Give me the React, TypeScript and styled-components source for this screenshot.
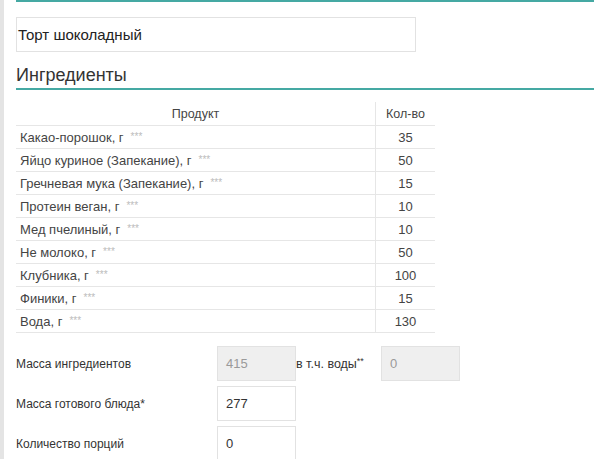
import styled, { createGlobalStyle } from "styled-components";

const GlobalStyle = createGlobalStyle`
  html, body {
    margin: 0;
    padding: 0;
    background: #ffffff;
  }
  body {
    font-family: "Liberation Sans", Arial, sans-serif;
    color: #333;
  }
`;

const Page = styled.div`
  min-height: 459px;
  border-left: 4px solid #e4e4e4;
  box-sizing: border-box;
  padding-left: 12px;
  overflow: hidden;
`;

const TopRule = styled.div`
  height: 2px;
  background: #45a9a3;
`;

const NameBox = styled.div`
  margin-top: 15px;
  width: 400px;
  height: 35px;
  box-sizing: border-box;
  border: 1px solid #e2e2e2;
  padding-left: 1px;
  display: flex;
  align-items: center;
  font-size: 15px;
  color: #222;
`;

const Heading = styled.h2`
  margin: 12px 0 0;
  font-size: 18px;
  font-weight: normal;
  color: #333;
  line-height: 22px;
  padding-bottom: 2px;
  border-bottom: 2px solid #45a9a3;
`;

const Table = styled.table`
  margin-top: 12px;
  width: 419px;
  border-collapse: collapse;
  font-size: 13px;
  color: #444;
`;

const HeadCell = styled.th<{ $qty?: boolean }>`
  height: 23px;
  padding: 0;
  font-weight: normal;
  font-size: 12.5px;
  text-align: center;
  width: ${(p) => (p.$qty ? "59px" : "auto")};
  border-left: ${(p) => (p.$qty ? "1px solid #e6e6e6" : "none")};
  border-bottom: 1px solid #e6e6e6;
`;

const Cell = styled.td<{ $qty?: boolean }>`
  height: 22px;
  padding: 0 0 0 ${(p) => (p.$qty ? "0" : "4px")};
  text-align: ${(p) => (p.$qty ? "center" : "left")};
  border-left: ${(p) => (p.$qty ? "1px solid #e6e6e6" : "none")};
  border-bottom: 1px solid #e6e6e6;
  white-space: nowrap;
`;

const Stars = styled.span`
  margin-left: 7px;
  font-size: 10px;
  color: #bcbcbc;
  vertical-align: 2px;
`;

const Form = styled.div`
  margin-top: 13px;
  display: flex;
  flex-direction: column;
  gap: 5px;
`;

const FormRow = styled.div`
  display: flex;
  align-items: center;
  height: 35px;
`;

const Label = styled.div`
  width: 201px;
  font-size: 12px;
  color: #333;
`;

const SubLabel = styled.div`
  width: 85px;
  font-size: 12.5px;
  color: #333;
  sup {
    font-size: 9px;
    vertical-align: 4px;
  }
`;

const Field = styled.div<{ $disabled?: boolean }>`
  width: 79px;
  height: 35px;
  box-sizing: border-box;
  border: 1px solid #e2e2e2;
  background: ${(p) => (p.$disabled ? "#efefef" : "#ffffff")};
  color: ${(p) => (p.$disabled ? "#9a9a9a" : "#333")};
  font-size: 13px;
  padding: 0 8px;
  display: flex;
  align-items: center;
`;

const ingredients: [string, number][] = [
  ["Какао-порошок, г", 35],
  ["Яйцо куриное (Запекание), г", 50],
  ["Гречневая мука (Запекание), г", 15],
  ["Протеин веган, г", 10],
  ["Мед пчелиный, г", 10],
  ["Не молоко, г", 50],
  ["Клубника, г", 100],
  ["Финики, г", 15],
  ["Вода, г", 130],
];

export default function App() {
  return (
    <>
      <GlobalStyle />
      <Page>
        <TopRule />
        <NameBox>Торт шоколадный</NameBox>
        <Heading>Ингредиенты</Heading>
        <Table>
          <thead>
            <tr>
              <HeadCell>Продукт</HeadCell>
              <HeadCell $qty>Кол-во</HeadCell>
            </tr>
          </thead>
          <tbody>
            {ingredients.map(([name, qty]) => (
              <tr key={name}>
                <Cell>
                  {name}
                  <Stars>***</Stars>
                </Cell>
                <Cell $qty>{qty}</Cell>
              </tr>
            ))}
          </tbody>
        </Table>
        <Form>
          <FormRow>
            <Label>Масса ингредиентов</Label>
            <Field $disabled>415</Field>
            <SubLabel>
              в т.ч. воды<sup>**</sup>
            </SubLabel>
            <Field $disabled>0</Field>
          </FormRow>
          <FormRow>
            <Label>Масса готового блюда*</Label>
            <Field>277</Field>
          </FormRow>
          <FormRow>
            <Label>Количество порций</Label>
            <Field>0</Field>
          </FormRow>
        </Form>
      </Page>
    </>
  );
}
